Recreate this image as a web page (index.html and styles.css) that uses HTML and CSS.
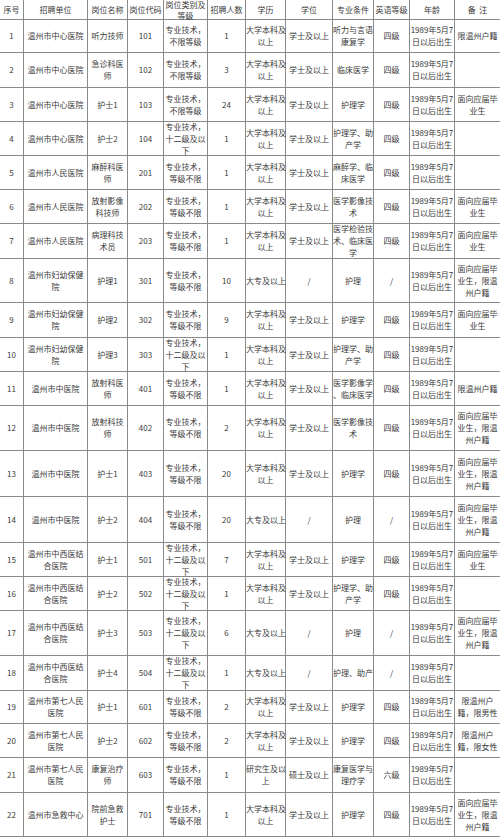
FILE: index.html
```html
<!DOCTYPE html>
<html lang="zh-CN">
<head>
<meta charset="utf-8">
<title>招聘岗位表</title>
<link rel="stylesheet" href="styles.css">
</head>
<body>
<table class="recruit">
<colgroup>
<col class="c1"><col class="c2"><col class="c3"><col class="c4"><col class="c5"><col class="c6"><col class="c7"><col class="c8"><col class="c9"><col class="c10"><col class="c11"><col class="c12">
</colgroup>
<thead>
<tr class="head"><th>序号</th><th>招聘单位</th><th>岗位名称</th><th>岗位代码</th><th><div class="tight">岗位类别及<br>等级</div></th><th>招聘人数</th><th>学历</th><th>学位</th><th>专业条件</th><th>英语等级</th><th>年龄</th><th>备&nbsp;&nbsp;注</th></tr>
</thead>
<tbody>
<tr class="h33"><td>1</td><td>温州市中心医院</td><td>听力技师</td><td>101</td><td>专业技术，<br>不限等级</td><td>1</td><td>大学本科及<br>以上</td><td>学士及以上</td><td>听力与言语<br>康复学</td><td>四级</td><td>1989年5月7<br>日以后出生</td><td>限温州户籍</td></tr>
<tr class="h35"><td>2</td><td>温州市中心医院</td><td>急诊科医<br>师</td><td>102</td><td>专业技术，<br>不限等级</td><td>3</td><td>大学本科及<br>以上</td><td>学士及以上</td><td>临床医学</td><td>四级</td><td>1989年5月7<br>日以后出生</td><td></td></tr>
<tr class="h34"><td>3</td><td>温州市中心医院</td><td>护士1</td><td>103</td><td>专业技术，<br>不限等级</td><td>24</td><td>大学本科及<br>以上</td><td>学士及以上</td><td>护理学</td><td>四级</td><td>1989年5月7<br>日以后出生</td><td>面向应届毕<br>业生</td></tr>
<tr class="h34"><td>4</td><td>温州市中心医院</td><td>护士2</td><td>104</td><td><div class="tight">专业技术，<br>十二级及以<br>下</div></td><td>1</td><td>大学本科及<br>以上</td><td>学士及以上</td><td>护理学、助<br>产学</td><td>四级</td><td>1989年5月7<br>日以后出生</td><td></td></tr>
<tr class="h34"><td>5</td><td>温州市人民医院</td><td>麻醉科医<br>师</td><td>201</td><td>专业技术，<br>等级不限</td><td>1</td><td>大学本科及<br>以上</td><td>学士及以上</td><td>麻醉学、临<br>床医学</td><td>四级</td><td>1989年5月7<br>日以后出生</td><td></td></tr>
<tr class="h34"><td>6</td><td>温州市人民医院</td><td>放射影像<br>科技师</td><td>202</td><td>专业技术，<br>等级不限</td><td>1</td><td>大学本科及<br>以上</td><td>学士及以上</td><td>医学影像技<br>术</td><td>四级</td><td>1989年5月7<br>日以后出生</td><td>面向应届毕<br>业生</td></tr>
<tr class="h35"><td>7</td><td>温州市人民医院</td><td>病理科技<br>术员</td><td>203</td><td>专业技术，<br>等级不限</td><td>1</td><td>大学本科及<br>以上</td><td>学士及以上</td><td><div class="tight">医学检验技<br>术、临床医<br>学</div></td><td>四级</td><td>1989年5月7<br>日以后出生</td><td>面向应届毕<br>业生</td></tr>
<tr class="h44"><td>8</td><td>温州市妇幼保健<br>院</td><td>护理1</td><td>301</td><td>专业技术，<br>等级不限</td><td>10</td><td>大专及以上</td><td>/</td><td>护理</td><td>/</td><td>1989年5月7<br>日以后出生</td><td><div class="tight">面向应届毕<br>业生，限温<br>州户籍</div></td></tr>
<tr class="h35"><td>9</td><td>温州市妇幼保健<br>院</td><td>护理2</td><td>302</td><td>专业技术，<br>等级不限</td><td>9</td><td>大学本科及<br>以上</td><td>学士及以上</td><td>护理学</td><td>四级</td><td>1989年5月7<br>日以后出生</td><td>面向应届毕<br>业生</td></tr>
<tr class="h34"><td>10</td><td>温州市妇幼保健<br>院</td><td>护理3</td><td>303</td><td><div class="tight">专业技术，<br>十二级及以<br>下</div></td><td>1</td><td>大学本科及<br>以上</td><td>学士及以上</td><td>护理学、助<br>产学</td><td>四级</td><td>1989年5月7<br>日以后出生</td><td></td></tr>
<tr class="h34"><td>11</td><td>温州市中医院</td><td>放射科医<br>师</td><td>401</td><td>专业技术，<br>等级不限</td><td>1</td><td>大学本科及<br>以上</td><td>学士及以上</td><td>医学影像学<br>、临床医学</td><td>四级</td><td>1989年5月7<br>日以后出生</td><td>限温州户籍</td></tr>
<tr class="h45"><td>12</td><td>温州市中医院</td><td>放射科技<br>师</td><td>402</td><td>专业技术，<br>等级不限</td><td>2</td><td>大学本科及<br>以上</td><td>学士及以上</td><td>医学影像技<br>术</td><td>四级</td><td>1989年5月7<br>日以后出生</td><td><div class="tight">面向应届毕<br>业生，限温<br>州户籍</div></td></tr>
<tr class="h46"><td>13</td><td>温州市中医院</td><td>护士1</td><td>403</td><td>专业技术，<br>等级不限</td><td>20</td><td>大学本科及<br>以上</td><td>学士及以上</td><td>护理学</td><td>四级</td><td>1989年5月7<br>日以后出生</td><td><div class="tight">面向应届毕<br>业生，限温<br>州户籍</div></td></tr>
<tr class="h46"><td>14</td><td>温州市中医院</td><td>护士2</td><td>404</td><td>专业技术，<br>等级不限</td><td>20</td><td>大专及以上</td><td>/</td><td>护理</td><td>/</td><td>1989年5月7<br>日以后出生</td><td><div class="tight">面向应届毕<br>业生，限温<br>州户籍</div></td></tr>
<tr class="h34"><td>15</td><td>温州市中西医结<br>合医院</td><td>护士1</td><td>501</td><td><div class="tight">专业技术，<br>十二级及以<br>下</div></td><td>7</td><td>大学本科及<br>以上</td><td>学士及以上</td><td>护理学</td><td>四级</td><td>1989年5月7<br>日以后出生</td><td>面向应届毕<br>业生</td></tr>
<tr class="h34"><td>16</td><td>温州市中西医结<br>合医院</td><td>护士2</td><td>502</td><td><div class="tight">专业技术，<br>十二级及以<br>下</div></td><td>1</td><td>大学本科及<br>以上</td><td>学士及以上</td><td>护理学、助<br>产学</td><td>四级</td><td>1989年5月7<br>日以后出生</td><td></td></tr>
<tr class="h45"><td>17</td><td>温州市中西医结<br>合医院</td><td>护士3</td><td>503</td><td><div class="tight">专业技术，<br>十二级及以<br>下</div></td><td>6</td><td>大专及以上</td><td>/</td><td>护理</td><td>/</td><td>1989年5月7<br>日以后出生</td><td><div class="tight">面向应届毕<br>业生，限温<br>州户籍</div></td></tr>
<tr class="h35"><td>18</td><td>温州市中西医结<br>合医院</td><td>护士4</td><td>504</td><td><div class="tight">专业技术，<br>十二级及以<br>下</div></td><td>1</td><td>大专及以上</td><td>/</td><td>护理、助产</td><td>/</td><td>1989年5月7<br>日以后出生</td><td></td></tr>
<tr class="h33"><td>19</td><td>温州市第七人民<br>医院</td><td>护士1</td><td>601</td><td>专业技术，<br>等级不限</td><td>2</td><td>大学本科及<br>以上</td><td>学士及以上</td><td>护理学</td><td>四级</td><td>1989年5月7<br>日以后出生</td><td>限温州户<br>籍，限男性</td></tr>
<tr class="h34"><td>20</td><td>温州市第七人民<br>医院</td><td>护士2</td><td>602</td><td>专业技术，<br>等级不限</td><td>2</td><td>大学本科及<br>以上</td><td>学士及以上</td><td>护理学</td><td>四级</td><td>1989年5月7<br>日以后出生</td><td>限温州户<br>籍，限女性</td></tr>
<tr class="h35"><td>21</td><td>温州市第七人民<br>医院</td><td>康复治疗<br>师</td><td>603</td><td>专业技术，<br>等级不限</td><td>1</td><td>研究生及以<br>上</td><td>硕士及以上</td><td>康复医学与<br>理疗学</td><td>六级</td><td>1989年5月7<br>日以后出生</td><td></td></tr>
<tr class="h43"><td>22</td><td>温州市急救中心</td><td>院前急救<br>护士</td><td>701</td><td>专业技术，<br>等级不限</td><td>1</td><td>大学本科及<br>以上</td><td>学士及以上</td><td>护理学</td><td>四级</td><td>1989年5月7<br>日以后出生</td><td><div class="tight">面向应届毕<br>业生，限温<br>州户籍</div></td></tr>
</tbody>
</table>
</body>
</html>
```

FILE: styles.css
```css
html, body {
  margin: 0;
  padding: 0;
  background: #ffffff;
}

body {
  width: 500px;
  height: 837px;
  overflow: hidden;
  font-family: "Noto Sans CJK SC", "Noto Sans", sans-serif;
  font-size: 8px;
  color: #3a3a3a;
}

.recruit {
  width: 500px;
  table-layout: fixed;
  border-collapse: separate;
  border-spacing: 0;
}

.c1 { width: 24px; }
.c2 { width: 64px; }
.c3 { width: 40px; }
.c4 { width: 36px; }
.c5 { width: 44px; }
.c6 { width: 38px; }
.c7 { width: 40px; }
.c8 { width: 47px; }
.c9 { width: 41px; }
.c10 { width: 36px; }
.c11 { width: 45px; }
.c12 { width: 45px; }

.recruit th,
.recruit td {
  box-sizing: border-box;
  padding: 0;
  border-right: 1px solid #8a8a8a;
  border-bottom: 1px solid #8a8a8a;
  text-align: center;
  vertical-align: middle;
  white-space: nowrap;
  line-height: 12px;
  font-weight: normal;
  overflow: visible;
}

.recruit th:last-child,
.recruit td:last-child {
  border-right: none;
}

.recruit th {
  line-height: 11px;
}

.tight {
  margin: -4px 0;
}

.head { height: 20px; }
.h33 { height: 33px; }
.h34 { height: 34px; }
.h35 { height: 35px; }
.h43 { height: 44px; }
.h44 { height: 44px; }
.h45 { height: 45px; }
.h46 { height: 46px; }
```
